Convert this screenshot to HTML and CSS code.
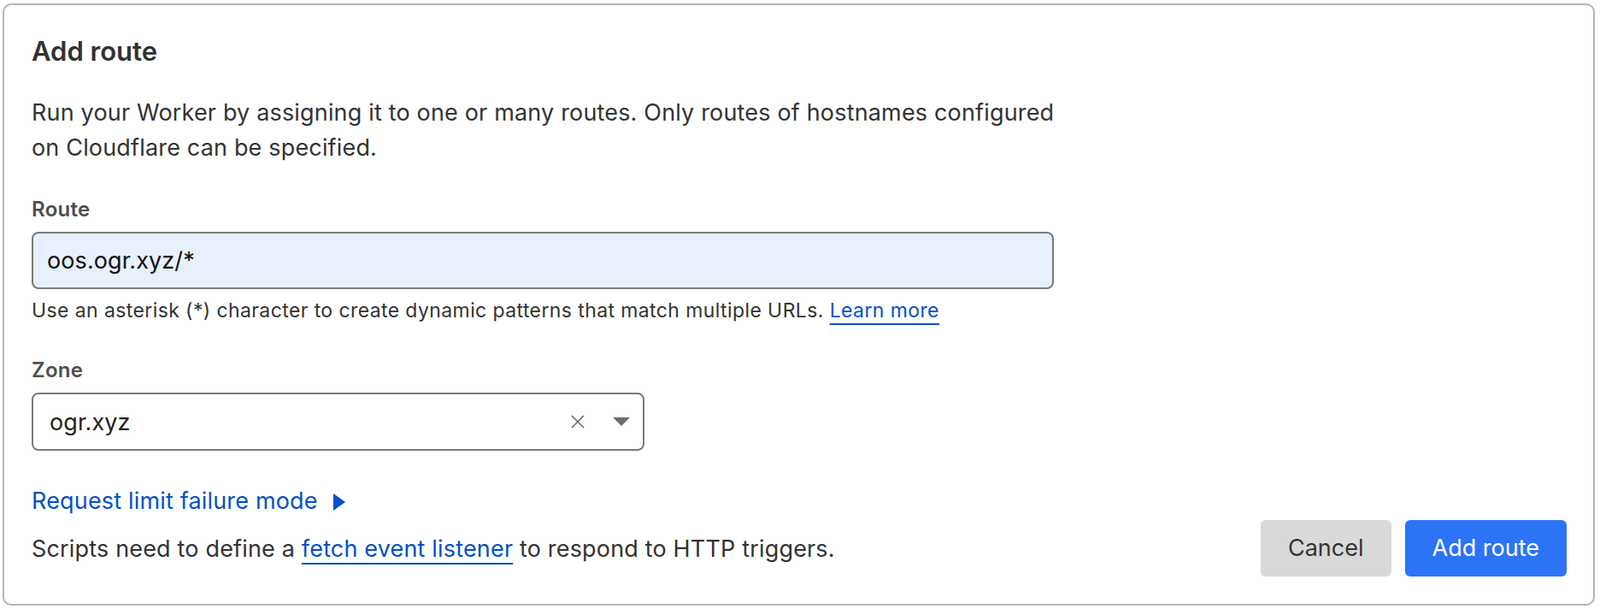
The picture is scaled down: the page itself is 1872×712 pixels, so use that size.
FILE: index.html
```html
<!DOCTYPE html>
<html>
<head>
	<title>Add route</title>
	<link rel="stylesheet" href="styles.css">
</head>
<body>

<!-- Add route dialog for a Worker -->
<div class="route_card">
	<div class="card_title">Add route</div>

	<p class="intro">Run your Worker by assigning it to one or many routes. Only routes of hostnames configured on Cloudflare can be specified.</p>

	<label class="field_label" for="route">Route</label>
	<input type="text" class="route_input" id="route" value="oos.ogr.xyz/*" />
	<div class="helper">Use an asterisk (*) character to create dynamic patterns that match multiple URLs. <a class="link" href="#">Learn more</a></div>

	<div class="field_label zone_label">Zone</div>
	<div class="zone_select">
		<span class="zone_value">ogr.xyz</span>
		<span class="zone_clear">
			<svg width="16" height="16" viewBox="0 0 16 16"><path d="M1 1 L15 15 M15 1 L1 15" stroke="#666" stroke-width="1.5" fill="none"/></svg>
		</span>
		<span class="zone_arrow">
			<svg width="20" height="10" viewBox="0 0 20 10"><path d="M0 0 H20 L10 10 Z" fill="#6b6b6b"/></svg>
		</span>
	</div>

	<div class="toggle_row">
		<a class="toggle_link" href="#">Request limit failure mode</a>
		<svg class="toggle_arrow" width="14" height="20" viewBox="0 0 14 20"><path d="M0 0 L14 10 L0 20 Z" fill="#0051c3"/></svg>
	</div>

	<div class="footer_row">
		<div class="footer_text">Scripts need to define a <a class="link" href="#">fetch event listener</a> to respond to HTTP triggers.</div>
		<div class="buttons">
			<div class="btn btn_cancel">Cancel</div>
			<div class="btn btn_primary">Add route</div>
		</div>
	</div>
</div>

</body>
</html>
```

FILE: styles.css
```css
body
{
	margin: 0;
	padding: 4px 6px 4px 3px;
	background-color: #FFFFFF;
	font-family: "Inter", "Liberation Sans", sans-serif;
	color: #333333;
}
.route_card
{
	border: 2px solid #b5b5b5;
	border-radius: 10px;
	padding: 36px 31px 31px 32px;
	height: 704px;
	box-sizing: border-box;
}
.card_title
{
	font-size: 31px;
	line-height: 36px;
	font-weight: 600;
	color: #313131;
}
.intro
{
	margin: 33px 0 0 0;
	font-size: 27px;
	line-height: 41px;
	max-width: 1215px;
	letter-spacing: 0.17px;
}
.field_label
{
	display: block;
	margin-top: 38px;
	font-size: 24px;
	line-height: 28px;
	font-weight: 600;
	letter-spacing: 0.3px;
	color: #4e4e4e;
}
.zone_label
{
	margin-top: 42px;
}
.route_input
{
	display: block;
	box-sizing: border-box;
	width: 1196px;
	height: 67px;
	margin-top: 12px;
	padding: 0 16px;
	border: 2px solid #7a7a7a;
	border-radius: 8px;
	background-color: #e8f0fe;
	font-family: "Inter", "Liberation Sans", sans-serif;
	font-size: 27px;
	letter-spacing: 0.1px;
	color: #111111;
	outline: none;
}
.helper
{
	margin-top: 11px;
	font-size: 23px;
	line-height: 28px;
	letter-spacing: 0.4px;
	color: #333333;
}
.link
{
	color: #0051c3;
	text-decoration: underline;
	text-decoration-thickness: 2px;
	text-underline-offset: 7px;
}
.zone_select
{
	display: flex;
	align-items: center;
	box-sizing: border-box;
	width: 717px;
	height: 68px;
	margin-top: 12px;
	padding: 0 15px 0 19px;
	border: 2px solid #7a7a7a;
	border-radius: 8px;
	font-size: 27px;
	letter-spacing: 0.1px;
	color: #222222;
}
.zone_value
{
	flex: 1;
}
.zone_clear
{
	display: flex;
	width: 16px;
	margin-right: 33px;
}
.zone_arrow
{
	display: flex;
	width: 20px;
}
.toggle_row
{
	display: flex;
	align-items: center;
	margin-top: 43px;
	height: 32px;
}
.toggle_link
{
	font-size: 27px;
	line-height: 32px;
	letter-spacing: 0.17px;
	color: #0051c3;
	text-decoration: none;
}
.toggle_arrow
{
	margin-left: 18px;
	margin-top: 2px;
}
.footer_row
{
	display: flex;
	align-items: center;
	justify-content: space-between;
	margin-top: 6px;
}
.footer_text
{
	font-size: 27px;
	line-height: 32px;
	letter-spacing: 0.17px;
	padding-top: 2px;
}
.buttons
{
	display: flex;
	gap: 16px;
}
.btn
{
	height: 66px;
	line-height: 66px;
	padding: 0 32px;
	border-radius: 6px;
	font-size: 27px;
}
.btn_cancel
{
	background-color: #d9d9d9;
	color: #333333;
}
.btn_primary
{
	background-color: #2c73f6;
	color: #FFFFFF;
}
```
